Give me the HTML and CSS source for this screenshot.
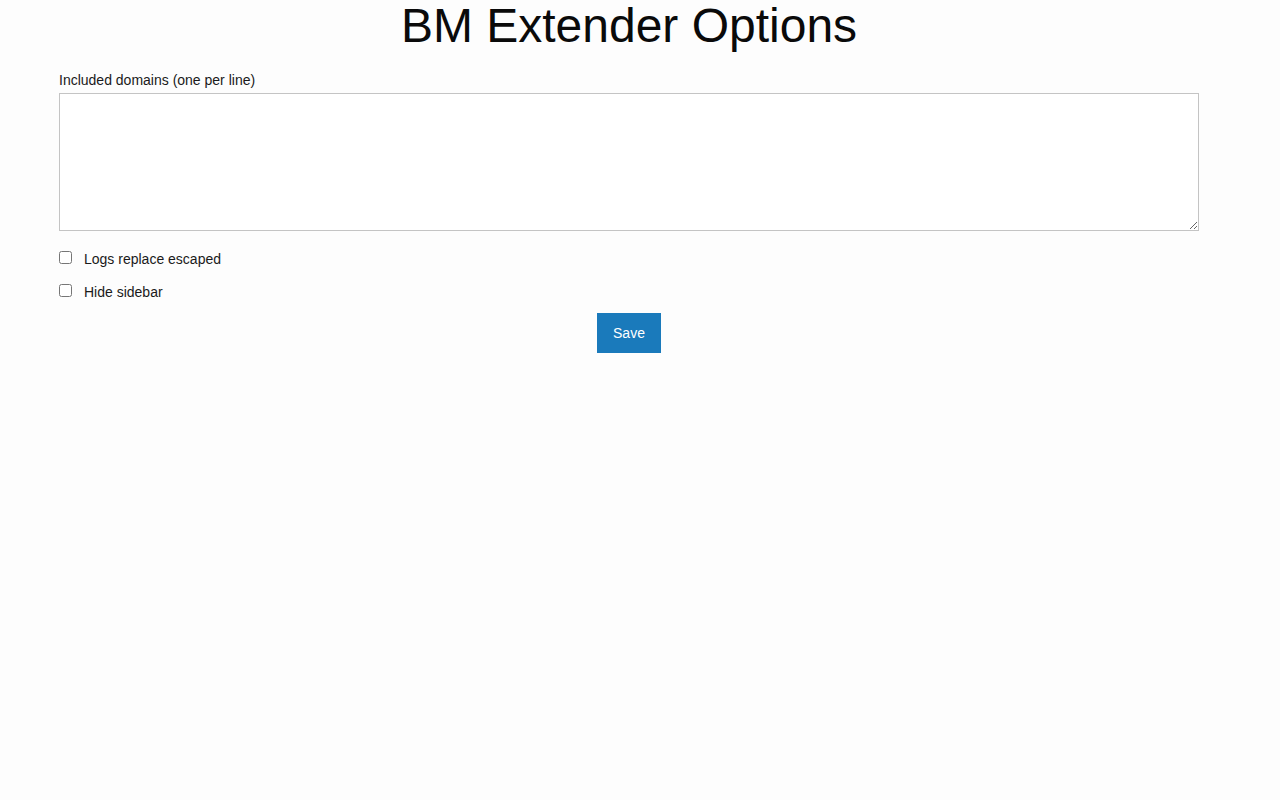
FILE: index.html
```html
<!DOCTYPE html>
<html>
<head>
<meta charset="utf-8">
<link rel="stylesheet" href="styles.css">
</head>
<body>
<div class="page">
  <h1 class="title">BM Extender Options</h1>
  <label class="field-label" for="domains">Included domains (one per line)</label>
  <textarea id="domains" class="domains"></textarea>
  <div class="check-row">
    <input type="checkbox" id="logs" class="check">
    <label for="logs" class="check-label">Logs replace escaped</label>
  </div>
  <div class="check-row">
    <input type="checkbox" id="sidebar" class="check">
    <label for="sidebar" class="check-label">Hide sidebar</label>
  </div>
  <div class="actions">
    <button class="save">Save</button>
  </div>
</div>
</body>
</html>
```
FILE: styles.css
```css
html, body {
  margin: 0;
  padding: 0;
  background: #fdfdfd;
}
body {
  font-family: "Liberation Sans", Arial, sans-serif;
  color: #111;
}
.page {
  width: 1140px;
  margin-left: 59px;
  display: flex;
  flex-direction: column;
}
.title {
  font-size: 48px;
  font-weight: normal;
  text-align: center;
  margin: 0;
  line-height: 52px;
  color: #0a0a0a;
}
.field-label {
  font-size: 14px;
  margin-top: 18px;
  line-height: 20px;
  color: #1a1a1a;
}
.domains {
  box-sizing: border-box;
  width: 1140px;
  height: 138px;
  margin: 3px 0 0 0;
  border: 1px solid #c4c4c4;
  background: #fff;
  resize: vertical;
}
.check-row {
  display: flex;
  align-items: center;
  height: 20px;
  margin-top: 18px;
}
.check-row + .check-row {
  margin-top: 13px;
}
.check {
  width: 13px;
  height: 13px;
  margin: 0 12px 0 0;
  position: relative;
  top: -2px;
}
.check-label {
  font-size: 14px;
  color: #1a1a1a;
}
.actions {
  display: flex;
  justify-content: center;
  margin-top: 11px;
}
.save {
  width: 64px;
  height: 40px;
  border: none;
  background: #1a7abb;
  color: #fff;
  font-family: "Liberation Sans", Arial, sans-serif;
  font-size: 14px;
  padding: 0;
}
```
